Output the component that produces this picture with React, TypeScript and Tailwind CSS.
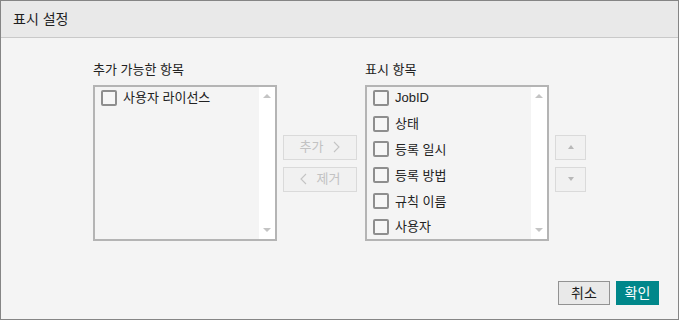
import React from "react";

const font = { fontFamily: '"Liberation Sans", "Noto Sans CJK KR", sans-serif' };

function Check({ label }: { label: string }) {
  return (
    <div className="flex items-center h-[25.8px] pl-[6px] gap-[6px]">
      <span className="w-[16px] h-[16px] border-2 border-[#8e8e8e] rounded-[2px] bg-[#f6f6f6] shrink-0" />
      <span className="text-[13px] text-[#222] leading-none">{label}</span>
    </div>
  );
}

function ListBox({ items }: { items: string[] }) {
  return (
    <div className="w-[184px] h-[156px] border-2 border-[#b4b4b4] flex bg-[#f4f4f4]">
      <div className="flex-1 -mt-[2px]">
        {items.map((it) => (
          <Check key={it} label={it} />
        ))}
      </div>
      <div className="w-[16px] bg-white flex flex-col items-center justify-between py-[7px]">
        <span className="w-0 h-0 border-l-[4px] border-r-[4px] border-b-[4px] border-l-transparent border-r-transparent border-b-[#c4c4c4]" />
        <span className="w-0 h-0 border-l-[4px] border-r-[4px] border-t-[4px] border-l-transparent border-r-transparent border-t-[#c4c4c4]" />
      </div>
    </div>
  );
}

function Chevron({ left }: { left?: boolean }) {
  return (
    <svg width="7" height="12" viewBox="0 0 7 12" className="shrink-0">
      <path
        d={left ? "M6 1 L1 6 L6 11" : "M1 1 L6 6 L1 11"}
        fill="none"
        stroke="#c4c4c4"
        strokeWidth="1.1"
      />
    </svg>
  );
}

export default function App() {
  return (
    <div style={font} className="w-[679px] h-[320px] border border-[#858585] bg-[#f4f4f4] flex flex-col">
      <div className="h-[37px] shrink-0 bg-[#e9e9e9] border-b border-[#c9c9c9] flex items-center pl-[12px]">
        <span className="text-[14px] text-[#1e1e1e]">표시 설정</span>
      </div>
      <div className="flex items-center pl-[92px] pt-[23px]">
        <div className="flex flex-col">
          <div className="text-[13px] text-[#222] h-[18px] leading-[18px] mb-[6px]">추가 가능한 항목</div>
          <ListBox items={["사용자 라이선스"]} />
        </div>
        <div className="flex flex-col gap-[7px] ml-[6px] mr-[8px] mt-[24px]">
          <button className="w-[74px] h-[25px] border border-[#dadada] bg-[#f1f1f1] text-[13px] text-[#c2c2c2] flex items-center justify-center gap-[10px]">
            <span>추가</span>
            <Chevron />
          </button>
          <button className="w-[74px] h-[25px] border border-[#dadada] bg-[#f1f1f1] text-[13px] text-[#c2c2c2] flex items-center justify-center gap-[10px]">
            <Chevron left />
            <span>제거</span>
          </button>
        </div>
        <div className="flex flex-col">
          <div className="text-[13px] text-[#222] h-[18px] leading-[18px] mb-[6px]">표시 항목</div>
          <ListBox items={["JobID", "상태", "등록 일시", "등록 방법", "규칙 이름", "사용자"]} />
        </div>
        <div className="flex flex-col gap-[7px] ml-[6px] mt-[24px]">
          <button className="w-[31px] h-[25px] border border-[#dadada] bg-[#f1f1f1] flex items-center justify-center">
            <span className="w-0 h-0 border-l-[3px] border-r-[3px] border-b-[4px] border-l-transparent border-r-transparent border-b-[#b8b8b8]" />
          </button>
          <button className="w-[31px] h-[25px] border border-[#dadada] bg-[#f1f1f1] flex items-center justify-center">
            <span className="w-0 h-0 border-l-[3px] border-r-[3px] border-t-[4px] border-l-transparent border-r-transparent border-t-[#b8b8b8]" />
          </button>
        </div>
      </div>
      <div className="flex justify-end gap-[6px] pr-[19px] mt-[40px]">
        <button className="w-[52px] h-[24px] border border-[#929292] bg-[#e9e9e9] text-[14px] text-[#1e1e1e] flex items-center justify-center">
          취소
        </button>
        <button className="w-[43px] h-[24px] bg-[#00878a] text-[14px] text-white flex items-center justify-center">
          확인
        </button>
      </div>
    </div>
  );
}
